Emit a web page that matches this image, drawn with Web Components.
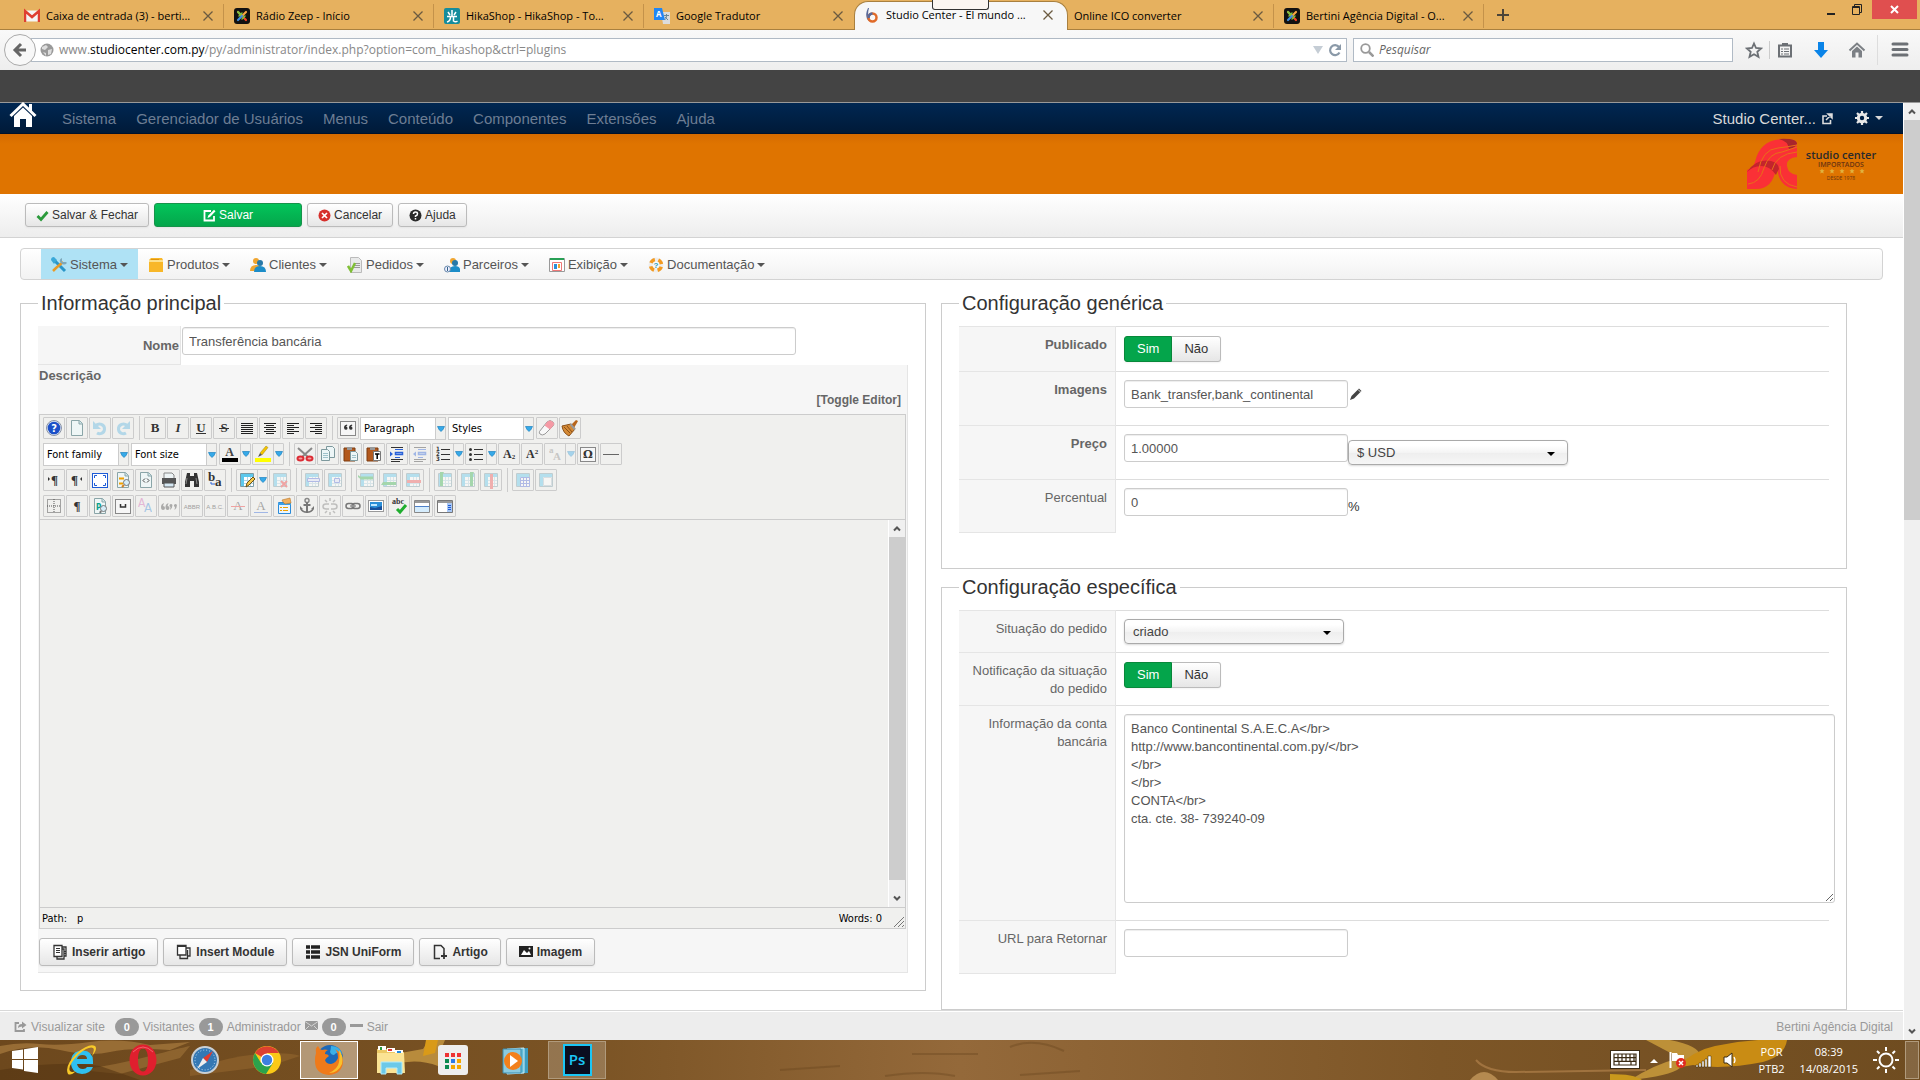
<!DOCTYPE html>
<html lang="pt-BR">
<head>
<meta charset="utf-8">
<title>Studio Center - El mundo ...</title>
<style>
  html, body {
    height: 100%;
    margin: 0;
  }

  body {
    display: flex;
    flex-direction: column;
    overflow: hidden;
    background: #fff;
    color: #555;
    font-family: "Liberation Sans", Arial, sans-serif;
    font-size: 13px;
    line-height: 18px;
    --ui-font: "Open Sans", "Noto Sans", sans-serif;
  }

  .band {
    flex: none;
    height: 32px;
    background: #444;
    border-bottom: 1px solid #999;
  }

  .window {
    display: flex;
    flex: 1;
    min-height: 0;
  }

  .document {
    display: flex;
    flex-direction: column;
    flex: 1;
    min-width: 0;
    margin-right: 1px;
  }

  main {
    display: grid;
    grid-template-columns: minmax(0, 1fr) minmax(0, 1fr);
    grid-template-rows: minmax(0, 1fr);
    gap: 15px;
    flex: 1;
    min-height: 0;
    overflow: hidden;
    padding: 9px 56px 0 20px;
  }

  .column {
    display: flex;
    flex-direction: column;
    gap: 4px;
  }
</style>
</head>
<body>
  <browser-tabs></browser-tabs>
  <browser-toolbar></browser-toolbar>
  <div class="band"></div>
  <div class="window">
    <div class="document">
      <admin-nav></admin-nav>
      <brand-header></brand-header>
      <action-toolbar></action-toolbar>
      <shop-menu></shop-menu>
      <main>
        <div class="column">
          <panel-box heading="Informação principal">
            <main-info></main-info>
          </panel-box>
        </div>
        <div class="column">
          <panel-box heading="Configuração genérica" class="loose">
            <config-row label="Publicado" type="toggle" strong></config-row>
            <config-row label="Imagens" type="text" value="Bank_transfer,bank_continental" suffix="pencil" strong></config-row>
            <config-row label="Preço" type="text" value="1.00000" suffix="currency" strong></config-row>
            <config-row label="Percentual" type="text" value="0" suffix="percent" last></config-row>
          </panel-box>
          <panel-box heading="Configuração específica" class="fill">
            <config-row label="Situação do pedido" type="select" value="criado"></config-row>
            <config-row label="Notificação da situação do pedido" type="toggle"></config-row>
            <config-row label="Informação da conta bancária" type="textarea" value="Banco Continental S.A.E.C.A&lt;/br&gt;
http://www.bancontinental.com.py/&lt;/br&gt;
&lt;/br&gt;
&lt;/br&gt;
CONTA&lt;/br&gt;
cta. cte. 38- 739240-09"></config-row>
            <config-row label="URL para Retornar" type="text" value="" last></config-row>
          </panel-box>
        </div>
      </main>
      <status-footer></status-footer>
    </div>
    <scroll-bar style="--thumb: 400px"></scroll-bar>
  </div>
  <task-bar></task-bar>

<script>
// ---------- icons ----------
const page = '<path d="M4.500 2.500h8l3 3v12h-11z" fill="#eef6f6" stroke="#8aa5a8"/><path d="M12 2.500v3.500h3.500" fill="#cfe6ea" stroke="#8aa5a8"/>';
const table = '<path d="M3.500 3.500h13v13h-13z" fill="#fff" stroke="#7a9aa5"/><path d="M4 4h12v3H4zM4 4h3v12H4z" fill="#5cc8ec"/><path d="M7 10.500h9M7 13.500h9M10.500 7v9M13.500 7v9" stroke="#b5d5e2"/>';
const frame = '<rect x="2.500" y="3.500" width="15" height="14" fill="#f6f6f6" stroke="#888"/>';
const letter = (t, more = '') => `<text x="10" y="14" text-anchor="middle" font-family="Liberation Serif, serif" font-size="13" fill="#333" ${more}>${t}</text>`;
const lines = (rows) => rows.map(([x, w], i) => `<rect x="${x}" y="${5 + i * 2}" width="${w}" height="1" fill="#222"/>`).join('');
const joomla = '<rect width="16" height="16" rx="3" fill="#111"/><g fill="none" stroke-width="2.200" stroke-linecap="round"><path d="M4 4l3 3M12 12l-3-3" stroke="#f44321"/><path d="M4 4l4 4" stroke="#7ac143"/><path d="M12 4L8 8" stroke="#f9a541"/><path d="M4 12l4-4" stroke="#3f8fe0"/><path d="M5 8l3-3M8 11l3-3" stroke="#7ac143" stroke-width="1.500"/></g>';

const ICONS = {
  // editor toolbar
  help: [20, '<circle cx="10" cy="10" r="7.500" fill="#dde6f5" stroke="#8a93a5"/><circle cx="10" cy="10" r="6.300" fill="#1c50c8"/><text x="10" y="14" text-anchor="middle" font-size="11" font-weight="bold" fill="#fff">?</text>'],
  page: [20, page],
  undo: [20, '<path d="M5 8.500c4-5 10-1.500 9.500 3-.5 4-5 5-7.500 3.500" fill="none" stroke="#5ab4e0" stroke-width="3"/><path d="M3 3v8h8z" fill="#5ab4e0"/>'],
  redo: [20, '<path d="M15 8.500c-4-5-10-1.500-9.500 3 .5 4 5 5 7.500 3.500" fill="none" stroke="#5ab4e0" stroke-width="3"/><path d="M17 3v8H9z" fill="#5ab4e0"/>'],
  bold: [20, letter('B', 'font-weight="bold"')],
  italic: [20, letter('I', 'font-weight="bold" font-style="italic"')],
  underline: [20, letter('U', 'font-weight="bold"') + '<path d="M5 15.500h10" stroke="#333"/>'],
  strike: [20, letter('S', 'font-weight="bold"') + '<path d="M5 10.500h10" stroke="#333"/>'],
  justify: [20, lines([[4, 12], [4, 12], [4, 12], [4, 12], [4, 12], [4, 12]])],
  center: [20, lines([[4, 12], [6, 8], [4, 12], [6, 8], [4, 12], [6, 8]])],
  left: [20, lines([[4, 12], [4, 7], [4, 12], [4, 7], [4, 12], [4, 7]])],
  right: [20, lines([[4, 12], [9, 7], [4, 12], [9, 7], [4, 12], [9, 7]])],
  quote: [20, frame + '<path d="M6 9.500q0-2.500 3-3l.3 1-1.300 1q1.500.2 1.500 1.700t-1.700 1.600T6 9.500zM11 9.500q0-2.500 3-3l.3 1-1.300 1q1.500.2 1.500 1.700t-1.700 1.600T11 9.500z" fill="#333"/>'],
  eraser: [20, '<path d="M2.500 13.500L10 4q3-3 6 0 2 2 0 4l-8 8q-3 2-5 0-1-1-.5-2.500z" fill="#f8f8f8" stroke="#999"/><path d="M7.500 7.500L10 4q3-3 6 0 2 2 0 4l-3 3.500z" fill="#f59aa5"/>'],
  broom: [20, '<path d="M2 8l9-2 4 5-6 7Q3 15 2 8z" fill="#d58a35" stroke="#8a5018"/><path d="M4 9l6 6M7 8l5 6" stroke="#8a5018"/><path d="M11 7l5-5 2 1-4 7z" fill="#b8651b"/><path d="M10.500 6l4.500 5.500" stroke="#999" stroke-width="2"/>'],
  color: [20, '<text x="9.500" y="12" text-anchor="middle" font-family="Liberation Serif, serif" font-size="12" font-weight="bold" fill="#444">A</text><rect x="2" y="14" width="16" height="4"/>'],
  marker: [20, '<path d="M7 9l6-7 2 1.500L9 11z" fill="#f5c400" stroke="#9a8420" stroke-width=".5"/><path d="M7 9l2 2-4 2z" fill="#555"/><rect x="2" y="14" width="16" height="4" fill="#ff0"/>'],
  cut: [20, '<path d="M3 4l10 9M17 4L7 13" stroke="#888" stroke-width="2"/><ellipse cx="5.500" cy="14.500" rx="3" ry="2" fill="#f3a0a3" stroke="#dc2d35" stroke-width="2"/><ellipse cx="14.500" cy="14.500" rx="3" ry="2" fill="#f3a0a3" stroke="#dc2d35" stroke-width="2"/>'],
  copy: [20, '<path d="M8.500 2.500h6l2 2v9h-8z" fill="#edf6f7" stroke="#7d999d"/><path d="M3.500 5.500h6l2 2v9h-8z" fill="#edf6f7" stroke="#7d999d"/><path d="M5 9.500h5M5 11.500h5M5 13.500h5" stroke="#9fc2ca"/>'],
  paste: [20, '<path d="M3 4h11v13H3z" fill="#b3591d" stroke="#7c3c10"/><path d="M6 3h5v3H6z" fill="#999"/><path d="M9.500 7.500h5l2 2v7h-7z" fill="#edf6f7" stroke="#7d999d"/><path d="M11 11.500h4M11 13.500h4" stroke="#9fc2ca"/>'],
  pastetext: [20, '<path d="M3 4h11v13H3z" fill="#b3591d" stroke="#7c3c10"/><path d="M6 3h5v3H6z" fill="#999"/><path d="M9.500 7.500h7v9h-7z" fill="#fff" stroke="#777"/><path d="M11 10h4.500M13.200 10v5" stroke="#000" stroke-width="1.500"/>'],
  indent: [20, '<path d="M4 3.500h12M4 15.500h12M4 17.500h9" stroke="#333"/><path d="M8 5.500h8M8 13.500h5" stroke="#2a62d8"/><path d="M8.500 8.500h7v2h-7z" fill="#cfe0ff" stroke="#2a62d8" stroke-width="1.500"/><path d="M3 7.500v5l3-2.500z" fill="#2a62d8"/>'],
  outdent: [20, '<path d="M4 3.500h12M4 15.500h12M4 17.500h9" stroke="#333"/><path d="M8 5.500h8M8 13.500h5" stroke="#2a62d8"/><path d="M8.500 8.500h7v2h-7z" fill="#cfe0ff" stroke="#2a62d8" stroke-width="1.500"/><path d="M6 7.500v5L3 10z" fill="#2a62d8"/>'],
  numlist: [20, '<path d="M8 5.500h9M8 10.500h9M8 15.500h9" stroke="#333"/><g font-size="6" font-weight="bold" fill="#333"><text x="3" y="7">1</text><text x="3" y="12">2</text><text x="3" y="17">3</text></g>'],
  bullist: [20, '<path d="M8 5.500h9M8 10.500h9M8 15.500h9" stroke="#333"/><g fill="#333"><circle cx="4.500" cy="5.500" r="1.500"/><circle cx="4.500" cy="10.500" r="1.500"/><circle cx="4.500" cy="15.500" r="1.500"/></g>'],
  sub: [20, '<text x="4" y="14" font-family="Liberation Serif, serif" font-size="12" font-weight="bold" fill="#333">A<tspan font-size="7" dy="1">2</tspan></text>'],
  sup: [20, '<text x="4" y="14" font-family="Liberation Serif, serif" font-size="12" font-weight="bold" fill="#333">A<tspan font-size="7" dy="-4">2</tspan></text>'],
  style: [20, '<text x="4" y="9" font-family="Liberation Serif, serif" font-size="9" font-weight="bold" fill="#888">a</text><text x="8" y="16" font-family="Liberation Serif, serif" font-size="11" font-weight="bold" fill="#888">A</text>'],
  omega: [20, frame + '<text x="10" y="14" text-anchor="middle" font-family="DejaVu Serif, serif" font-size="11" font-weight="bold" fill="#333">Ω</text>'],
  rule: [20, '<path d="M2 10.500h16" stroke="#666"/>'],
  ltr: [20, '<text x="7" y="14" font-family="Liberation Serif, serif" font-size="13" font-weight="bold" fill="#333">¶</text><path d="M4 7v4l2-2z" fill="#333"/>'],
  rtl: [20, '<text x="4" y="14" font-family="Liberation Serif, serif" font-size="13" font-weight="bold" fill="#333">¶</text><path d="M15 7v4l-2-2z" fill="#333"/>'],
  pilcrow: [20, letter('¶', 'font-weight="bold"')],
  full: [20, '<rect x="2.500" y="3.500" width="15" height="14" fill="#fff" stroke="#1d5bd6"/><path d="M4.500 8V5.500H7M13 5.500h2.500V8M15.500 13v2.500H13M7 15.500H4.500V13" fill="none" stroke="#1d5bd6"/>'],
  preview: [20, page + '<path d="M6 8.500h5M6 13.500h4" stroke="#f0a000" stroke-width="2"/><circle cx="13.500" cy="12.500" r="3" fill="#d5ecf8" stroke="#777"/><path d="M11 15l-2 2" stroke="#d08020" stroke-width="2"/>'],
  code: [20, page + '<path d="M9 8.500l-2 2 2 2M11 8.500l2 2-2 2" fill="none" stroke="#444"/>'],
  print: [20, '<path d="M5 3h8l2 2v4H5z" fill="#eef4f5" stroke="#888"/><path d="M3 8h14v6H3z" fill="#555"/><path d="M5 13h10v4H5z" fill="#d5e8f3" stroke="#555"/>'],
  find: [20, '<path d="M5 3h3v3h4V3h3l2 9v5h-5v-6H8v6H3v-5z" fill="#333"/><path d="M5 8l-1 6M14 8l1 6" stroke="#888"/>'],
  replace: [20, '<g font-family="Liberation Serif, serif" font-size="13" font-weight="bold" fill="#333"><text x="3" y="11">b</text><text x="10" y="16">a</text></g><path d="M6 12v2h4" fill="none" stroke="#2a62d8"/>'],
  tableedit: [20, table + '<path d="M9 17l1-4 6-6 2 2-6 6z" fill="#f5c84a" stroke="#6b5215"/>'],
  tabledel: [20, table + '<path d="M11 11l6 6M17 11l-6 6" stroke="#e33" stroke-width="2"/>'],
  rowprops: [20, table + '<path d="M5.500 8.500h12v3h-12z" fill="#dfe5ff" stroke="#556ad8"/>'],
  cellprops: [20, table + '<path d="M9.500 8.500h5v4h-5z" fill="#dfe5ff" stroke="#556ad8"/>'],
  rowbefore: [20, table + '<path d="M1 5l2 1.500h13v3H4L1 7z" fill="#35b04a"/>'],
  rowafter: [20, table + '<path d="M1 15l2-3h13v3H4z" fill="#35b04a"/>'],
  rowdel: [20, table + '<path d="M4 10h14v3H4z" fill="#f05050"/>'],
  colbefore: [20, table + '<path d="M5 2h4l-1 2v12H5z" fill="#35b04a"/>'],
  colafter: [20, table + '<path d="M12 2h4l-1 2v12h-3z" fill="#35b04a"/>'],
  coldel: [20, table + '<path d="M9 4h3v15H9z" fill="#f05050"/>'],
  split: [20, table + '<path d="M7.500 7.500h9v9h-9zM10.500 7v9M13.500 7v9M7 10.500h9M7 13.500h9" fill="none" stroke="#556ad8"/>'],
  merge: [20, table + '<path d="M7.500 7.500h8v8h-8z" fill="#fff" stroke="#b5c5d0"/>'],
  grid: [20, '<path d="M3.500 3.500h13v13h-13zM10 3v14M3 10h14" fill="none" stroke="#555" stroke-dasharray="1 1"/>'],
  template: [20, page + '<text x="6" y="14" font-size="8" font-weight="bold" fill="#08a08a">P</text><circle cx="13.500" cy="12.500" r="3" fill="#d5ecf8" stroke="#777"/><path d="M11 15l-1 2" stroke="#777" stroke-width="2"/>'],
  nbsp: [20, frame + '<path d="M7.500 8v3h5V8" fill="none" stroke="#333" stroke-width="1.500"/>'],
  styleprops: [20, '<text x="2" y="11" font-size="12" fill="#d060b0">A</text><text x="8" y="16" font-size="13" fill="#3a8ad8">A</text>'],
  cite: [20, '<path d="M2 11q0-3 3-4l-1 3q2 0 2 2t-2 2-2-3zM6.500 11q0-3 3-4l-1 3q2 0 2 2t-2 2-2-3zM13.500 9q0 3-2.500 5l.5-3q-1.500-.500-1-2 1.500-2 3 0zM18 9q0 3-2.500 5l.5-3q-1.500-.500-1-2 1.500-2 3 0z" fill="#444"/>'],
  abbr: [20, '<text x="10" y="13" text-anchor="middle" font-family="Liberation Sans" font-size="6" fill="#222">ABBR</text>'],
  acronym: [20, '<text x="10" y="13" text-anchor="middle" font-family="Liberation Sans" font-size="6" fill="#222">A.B.C.</text>'],
  del: [20, letter('A') + '<path d="M3 10.500h14" stroke="#e33"/>'],
  ins: [20, letter('A') + '<path d="M3 16.500h14" stroke="#2a62d8"/>'],
  attribs: [20, '<path d="M4.500 6.500h12v11h-12z" fill="#eaf5ff" stroke="#2a8ad8"/><path d="M4 7h13v2H4z" fill="#39a0e8"/><path d="M6 11.500h2M9 11.500h5M6 14.500h2M9 14.500h5" stroke="#f0a000"/><path d="M8 4l8-2 1 5-6 1-2-2z" fill="#f0b060" stroke="#b87525" stroke-width=".6"/>'],
  anchor: [20, '<circle cx="10" cy="4.500" r="2" fill="none" stroke="#888" stroke-width="1.500"/><path d="M10 6v11M6.500 9h7" stroke="#777" stroke-width="2"/><path d="M3 10v3q2 4 7 4t7-4v-3l-3 3 1 .5q-2 2-5 2t-5-2l1-.5z" fill="#777"/>'],
  unlink: [20, '<path d="M9 8H6q-3 0-3 2.500T6 13h3M11 8h3q3 0 3 2.500T14 13h-3M10 2v3M10 16v3M5 4l2 2M15 4l-2 2M5 17l2-2M15 17l-2-2" fill="none" stroke="#777" stroke-width="1.500"/>'],
  link: [20, '<rect x="3" y="7.500" width="8" height="5" rx="2.500" fill="none" stroke="#777" stroke-width="1.500"/><rect x="9" y="7.500" width="8" height="5" rx="2.500" fill="none" stroke="#777" stroke-width="1.500"/><path d="M7 10h6" stroke="#999" stroke-width="1.500"/>'],
  image: [20, '<rect x="2.500" y="4.500" width="15" height="11" fill="#fff" stroke="#999"/><path d="M4 6h12v8H4z" fill="#2a8fd8"/><path d="M4 14v-3l5 1 7-2v4z" fill="#164f9a"/><path d="M5 8h6v2H5z" fill="#bfe8ff"/>'],
  spell: [20, '<text x="3" y="8" font-size="8" font-weight="bold" font-family="Liberation Serif, serif" fill="#333">abc</text><path d="M8 13l3 3 6-7" fill="none" stroke="#1fae2e" stroke-width="3"/>'],
  hr2: [20, '<path d="M2.500 4.500h15v12h-15z" fill="#fff" stroke="#888"/><path d="M3 5h14v2H3z" fill="#999"/><path d="M3 11h14v5H3z" fill="#d5ecfc"/><path d="M3 10.500h14" stroke="#4d80c8"/>'],
  pagebreak: [20, '<path d="M2.500 4.500h15v12h-15z" fill="#fff" stroke="#777"/><path d="M3 5h14v2H3z" fill="#999"/><path d="M12 7h5v9h-5z" fill="#a9c8f5"/><path d="M13 9.500h3M13 11.500h3M13 13.500h3" stroke="#1d5bd6"/>'],

  // browser
  gmail: [16, '<path d="M1 2.500h14v11H1z" fill="#f5f5f5"/><path d="M1 14V3l7 6 7-6v11" fill="none" stroke="#df3f31" stroke-width="2.500"/>'],
  joomla: [16, joomla],
  hika: [16, '<rect width="16" height="16" rx="2" fill="#158c9c"/><path d="M8 2v6M3 8.500h10M4 4l2 3M12 4l-2 3M6.500 9q0 4-3.500 5M9.500 9v4q2 1.500 4 0" fill="none" stroke="#fff" stroke-width="1.500"/>'],
  translate: [16, '<path d="M7 4h9v12H9z" fill="#dcdcdc"/><path d="M0 0h8l3 12H0z" fill="#2086f3"/><text x="2" y="9" font-size="8" font-weight="bold" fill="#fff">A</text><path d="M10 7.500h5M12.500 6v2q0 3-2 4M11 9l3 3" stroke="#6b8795" fill="none"/>'],
  studio: [16, '<path d="M4 1Q1 7 3 12q2 3 5 3-4-3-4-7t1-7z" fill="#596a9a"/><circle cx="8.500" cy="10.500" r="4" fill="none" stroke="#e06a28" stroke-width="2.500"/><path d="M4.500 11q0-4 4-4.500" fill="none" stroke="#596a9a" stroke-width="2.500"/>'],
  close: [12, '<path d="M1.500 1.500l9 9M10.500 1.500l-9 9" stroke="#6b5a40" stroke-width="1.300"/>'],
  plus: [12, '<path d="M6 0v12M0 6h12" stroke="#4d4538" stroke-width="2"/>'],
  globe: [14, '<circle cx="7" cy="7" r="6.500" fill="#999"/><path d="M2 4l4-2 2 2-3 3-3-1zM8 7l4-1-1 5-3 1zM3 9l3 1v3z" fill="#ddd"/>'],
  back: [16, '<path d="M9 2L3 8l6 6M3 8h11" fill="none" stroke="#666" stroke-width="3"/>'],
  reload: [14, '<path d="M11.500 9.500A5 5 0 1 1 11 4" fill="none" stroke="#8a99a8" stroke-width="2.200"/><path d="M13 1v6H7z" fill="#8a99a8"/>'],
  search: [14, '<circle cx="5.500" cy="5.500" r="4.300" fill="none" stroke="#999" stroke-width="1.800"/><path d="M9 9l4.500 4.500" stroke="#999" stroke-width="2.500"/>'],
  star: [18, '<path d="M9 2.500l2 4.500 5 .5-3.700 3.300 1.200 5L9 13.200l-4.500 2.600 1.200-5L2 7.500 7 7z" fill="none" stroke="#6c7075" stroke-width="1.800"/>'],
  clipboard: [18, '<path d="M3 4.500h12v11H3z" fill="none" stroke="#6c7075" stroke-width="2"/><path d="M6 2h6v3H6z" fill="#6c7075"/><path d="M5 8h2M8 8h5M5 10.500h2M8 10.500h5M5 13h2M8 13h5" stroke="#6c7075"/>'],
  download: [18, '<path d="M6 1h6v8h4l-7 8-7-8h4z" fill="#0a84e8"/>'],
  homegrey: [18, '<path d="M1.500 9.500L9 2.500l7.500 7" fill="none" stroke="#7c8085" stroke-width="2"/><path d="M4 10l5-4.500 5 4.500v6.500h-3.500v-5h-3v5H4z" fill="#7c8085"/>'],
  menu: [18, '<path d="M2 3h14M2 8.500h14M2 14h14" stroke="#6c7075" stroke-width="3" stroke-linecap="round"/>'],

  // administrator
  home: [28, '<path d="M1.500 14L14 2l12.500 12" fill="none" stroke="#fff" stroke-width="3"/><path d="M20 2h3v8l-3-3zM5 14l9-8.500 9 8.500v11h-6v-8h-6v8H5z" fill="#fff"/>'],
  external: [12, '<path d="M6 3H2v7.500h7.500V7" fill="none" stroke="#ddd" stroke-width="1.600"/><path d="M7 1h4v4zM5 7l5-5" fill="#ddd" stroke="#ddd" stroke-width="1.500"/>'],
  gear: [14, '<circle cx="7" cy="7" r="3.700" fill="none" stroke="#e8e8e8" stroke-width="3"/><path d="M7 0v3M7 11v3M0 7h3M11 7h3M2 2l2 2M10 10l2 2M12 2l-2 2M2 12l2-2" stroke="#e8e8e8" stroke-width="2.200"/>'],
  check: [13, '<path d="M1.500 7l3.500 3.500L11.500 3" fill="none" stroke="#2b9a3b" stroke-width="2.800"/>'],
  edit: [13, '<path d="M8 2H1.500v9.500H11V7" fill="none" stroke="#fff" stroke-width="1.800"/><path d="M4.500 9l.8-2.500L11 .8l1.500 1.500L7 8z" fill="#fff"/>'],
  cancel: [13, '<circle cx="6.500" cy="6.500" r="6" fill="#d62f2b"/><path d="M4 4l5 5M9 4L4 9" stroke="#fff" stroke-width="1.700"/>'],
  question: [13, '<circle cx="6.500" cy="6.500" r="6" fill="#2a2a2a"/><path d="M4.500 5q0-2 2-2t2 1.700T6.500 7v1M6.500 9v1.500" fill="none" stroke="#fff" stroke-width="1.500"/>'],
  tools: [16, '<path d="M3 3l6 6 5 5" stroke="#2b96c8" stroke-width="3"/><path d="M0 3q0-3 3-3l3 3-3 4z" fill="#3aa8d8"/><path d="M12 5l-7 6-3 3" stroke="#e89a28" stroke-width="2.500"/><path d="M11 1v4h4l1 1q-3 3-6 0T11 1z" fill="#7ea8ba"/>'],
  box: [16, '<path d="M1 3l2-2h11l1 2v12H1z" fill="#f8b728"/><path d="M1 4h14" stroke="#fde08a" stroke-width="2"/><path d="M3 2.500h8" stroke="#e09510"/>'],
  users: [16, '<circle cx="6" cy="4" r="3" fill="#f0a530"/><path d="M0 14q0-6 6-6t5 6z" fill="#f0a530"/><circle cx="10" cy="6" r="3" fill="#2779a8"/><path d="M4 15q0-6 6-6t6 6z" fill="#1c8dc8"/>'],
  orders: [16, '<path d="M3.500.5h8l3 3v12h-11z" fill="#e9eaea" stroke="#bbb"/><path d="M7 6.500h6M7 8.500h6M7 10.500h6" stroke="#999"/><path d="M1 9l3 5 4-8" fill="none" stroke="#7fbf35" stroke-width="2.500"/>'],
  partners: [16, '<circle cx="9" cy="4" r="3" fill="#f0a530"/><circle cx="11" cy="6" r="3" fill="#2779a8"/><path d="M5 15q0-6 6-6t5 6z" fill="#1c8dc8"/><circle cx="3.500" cy="12" r="3" fill="#eef" stroke="#68a"/><path d="M3.500 10v4" stroke="#368"/>'],
  display: [16, '<path d="M.5 1.500h15v13H.5z" fill="#fff" stroke="#999"/><path d="M1 1h14v2H1z" fill="#28a055"/><path d="M3.500 5.500h9v8h-9z" fill="#fff" stroke="#e77"/><path d="M5 7h3v5H5z" fill="#2a8fd8"/><path d="M9 7h2v4H9z" fill="#f0a530"/>'],
  lifebuoy: [16, '<circle cx="8" cy="8" r="5.500" fill="none" stroke="#eee" stroke-width="4"/><circle cx="8" cy="8" r="5.500" fill="none" stroke="#f39a21" stroke-width="3.500" stroke-dasharray="5 3.640" stroke-dashoffset="-1.800"/><text x="8" y="11" text-anchor="middle" font-size="8" font-weight="bold" fill="#2a9ab8">?</text>'],
  pencil: [14, '<path d="M1 13l1.500-4L10 1.500 12.500 4 5 11.500z" fill="#444"/><path d="M9 2.500L11.500 5" stroke="#fff" stroke-width=".8"/>'],
  article: [16, '<path d="M10 3h4v9h-2" fill="none" stroke="#333" stroke-width="1.300"/><path d="M5 13v2h7V5h-2" fill="none" stroke="#333" stroke-width="1.300"/><path d="M2 1.500h8v11H2z" fill="#fff" stroke="#333" stroke-width="1.300"/><path d="M4 4.500h4M4 6.500h4M4 8.500h4M12 7.500h2M12 9.500h2" stroke="#333"/>'],
  module: [16, '<path d="M10 4h4v8h-2" fill="none" stroke="#333" stroke-width="1.300"/><path d="M4 11v3.500h7.500V6" fill="none" stroke="#333" stroke-width="1.300"/><path d="M1.500 1.500H10V11H1.500z" fill="#fff" stroke="#333" stroke-width="1.300"/><path d="M1 2h9" stroke="#333" stroke-width="2"/>'],
  list: [16, '<path d="M1 3h4M6 3h9M1 8h4M6 8h9M1 13h4M6 13h9" stroke="#222" stroke-width="3.500"/>'],
  newpage: [16, '<path d="M8 14.500H2.500v-13H9L12 4.500V9" fill="none" stroke="#333" stroke-width="1.500"/><path d="M12 9v6M9 12h6" stroke="#333" stroke-width="1.800"/>'],
  picture: [14, '<path d="M0 1h14v11H0z" fill="#222"/><path d="M2 10l3-5 3 3 2-2 2 4z" fill="#fff"/><circle cx="10.500" cy="3.500" r="1" fill="#fff"/>'],
  share: [13, '<path d="M5 3H1.500v8H10V9" fill="none" stroke="#999" stroke-width="1.800"/><path d="M4 8q0-4 4-4V1.500L12.500 5 8 8.500V6.500q-2.500 0-4 1.500z" fill="#999"/>'],
  mail: [13, '<path d="M0 1h13v9H0z" fill="#999"/><path d="M0 1.500l6.500 4.500L13 1.500M0 10l4-4M13 10L9 6" fill="none" stroke="#eee" stroke-width=".7"/>'],
  minus: [13, '<path d="M0 4h13v3H0z" fill="#999"/>'],

  // taskbar
  windows: [28, '<path d="M1 5l11-1.500V13H1zM13 3.300L27 1v12H13zM1 14h11v9.500L1 22zM13 14h14v13l-14-2z" fill="#fff"/>'],
  ie: [32, '<path fill-rule="evenodd" d="M28 20H12q1 5 6 5 3 0 4-2h6q-3 7-11 7Q6 29 6 18T17.500 6.500Q28 7 28 17zM22 15q0-4-4.500-4T12 15z" fill="#2fc0f0"/><path d="M3 30Q-1 22 12 9 24-1 30 2q3 3-3 10 3-7 1-8-4-2-14 6Q2 22 5 27q2 2 6 0-5 5-8 3z" fill="#f8c928"/>'],
  opera: [32, '<path fill-rule="evenodd" d="M16 .5c8 0 13.500 7 13.500 15.500S24 31.500 16 31.500 2.500 24.500 2.500 16 8 .5 16 .5zm0 4c-4 0-5 6-5 11.500s1 11.500 5 11.500 5-6 5-11.500-1-11.500-5-11.500z" fill="#e01f2e"/><path d="M6 8q10-10 20 0" fill="none" stroke="#f2606a"/>'],
  safari: [32, '<circle cx="16" cy="16" r="13" fill="#3478b4" stroke="#c9d0d5" stroke-width="2"/><circle cx="16" cy="16" r="10" fill="none" stroke="#bfe0f8" stroke-dasharray="1 2"/><path d="M24 7l-6 11-4-4z" fill="#e23b2e"/><path d="M8 25l6-11 4 4z" fill="#eee"/>'],
  chrome: [32, '<circle cx="16" cy="16" r="14" fill="#fbc916"/><path d="M16 16L3.900 9A14 14 0 0 1 28 9H16z" fill="#dd4030"/><path d="M16 16l-6 3L3.900 9A14 14 0 0 0 15 30l7-11z" fill="#2ba24c"/><circle cx="16" cy="16" r="6.500" fill="#fff"/><circle cx="16" cy="16" r="5.200" fill="#3d7fe0"/>'],
  firefox: [32, '<circle cx="17" cy="14" r="13" fill="#1c68b8"/><path d="M18 2q9 0 11 8-5-3-8 1-3 0-4-3 1-4 1-6z" fill="#3ab0e8"/><path d="M3 9Q2 4 5 2q1 3 4 4 3-1 6 0-3 1-3 4 3 0 4 2-3 2-4 4 1 4 6 4 5-1 7-6 0-6-3-9 8 4 8 13-1 12-14 13Q2 30 2 17q0-5 1-8z" fill="#ef7a1a"/><path d="M26 6q5 6 3 14-4 9-13 9 9-4 10-11 1-7 0-12z" fill="#f9c02c"/>'],
  explorer: [32, '<path d="M2 5h11l2 3h14v18H2z" fill="#edc965"/><path d="M3 2h8v4H3zM12 4h8v4h-8zM20 6h8v4h-8z" fill="#fff"/><path d="M5 3h2v3H5z" fill="#2a9a40"/><path d="M13 5h4v2h-4z" fill="#d33"/><path d="M22 7h4v2h-4z" fill="#28d"/><path d="M2 9h27l1 20H2z" fill="#fbe394"/><path d="M6 30V18h21v12h-5v-6H11v6z" fill="#6cc9e8" stroke="#b5ecfa"/>'],
  apps: [32, '<rect x="1" y="1" width="30" height="30" rx="3" fill="#eee"/><g><path d="M8 9h4v4H8zM14 9h4v4h-4zM20 9h4v4h-4z" fill="#e33"/><path d="M8 15h4v4H8z" fill="#0a8a50"/><path d="M14 15h4v4h-4z" fill="#2a7ae8"/><path d="M20 15h4v4h-4zM14 21h4v4h-4zM20 21h4v4h-4z" fill="#f5a800"/><path d="M8 21h4v4H8z" fill="#0a8a50"/></g>'],
  media: [32, '<path d="M12 5l17-1v25l-17 1z" fill="#3b9cc0"/><path d="M8 5l17-1v25L8 30z" fill="#62bcd8" stroke="#cceef8"/><path d="M4 5h18v24H4z" fill="#8ccbe0" stroke="#3b8cae"/><circle cx="14" cy="17" r="9" fill="#f2801c"/><path d="M11 11l8 6-8 6z" fill="#fff"/>'],
  ps: [32, '<rect x="3" y="1" width="27" height="30" fill="#0a0e20" stroke="#1bc6f6" stroke-width="2"/><text x="16" y="21" text-anchor="middle" font-family="Open Sans, sans-serif" font-size="15" font-weight="600" fill="#1bc6f6">Ps</text>'],
  keyboard: [30, '<rect x=".5" y="5.500" width="29" height="18" fill="#fff" stroke="#3a2a12"/><g stroke="#3a2a12" stroke-width="1.200" fill="none"><path d="M4 9h22v11H4zM4 12.700h22M4 16.300h22M8 9v7M12 9v7M16 9v7M20 9v7M24 9v7M9 16v4M21 16v4"/></g>'],
  up: [10, '<path d="M1 8l4-4 4 4z" fill="#fff"/>'],
  flag: [18, '<path d="M2.500 1v16" stroke="#fff" stroke-width="2"/><path d="M4 2h5l1 2h6v7h-6l-1-1H4z" fill="#fff"/><circle cx="13" cy="12" r="5" fill="#e02b20"/><path d="M11 10l4 4M15 10l-4 4" stroke="#fff" stroke-width="1.500"/>'],
  signal: [18, '<path d="M1 14h2v2H1zM4 12h2v4H4zM7 10h2v6H7zM10 8h2v8h-2zM13 5h3v11h-3z" fill="#fff" stroke="#3a2a12" stroke-width=".5"/>'],
  volume: [16, '<path d="M2 5h3l5-4v14l-5-4H2z" fill="#fff" stroke="#3a2a12"/><path d="M12 5q2 3 0 6" fill="none" stroke="#fff" stroke-width="1.300"/>'],
  sun: [28, '<circle cx="14" cy="14" r="6.500" fill="none" stroke="#fff" stroke-width="2"/><path d="M14 1v4M14 23v4M1 14h4M23 14h4M5 5l2.500 2.500M20.500 20.500L23 23M23 5l-2.500 2.500M7.500 20.500L5 23" stroke="#fff" stroke-width="2"/>'],
};

function icon(name, size) {
  const [box, body] = ICONS[name];
  const px = size || box;
  return `<svg width="${px}" height="${px}" viewBox="0 0 ${box} ${box}" aria-hidden="true">${body}</svg>`;
}

// ---------- shared styles ----------
const resetStyles = `
  * { box-sizing: border-box; }
  svg { display: block; flex: none; }
  a { color: inherit; text-decoration: none; }
  button, input, select, textarea { font: inherit; color: inherit; margin: 0; }
`;

const buttonStyles = `
  .btn {
    display: inline-flex;
    align-items: center;
    justify-content: center;
    gap: 4px;
    border: 1px solid #bbb;
    border-radius: 3px;
    background: linear-gradient(#fff, #e6e6e6);
    box-shadow: 0 1px 2px rgba(0, 0, 0, .05);
    color: #333;
    white-space: nowrap;
  }
`;

const caretStyles = `
  .caret {
    flex: none;
    width: 0;
    border: 4px solid transparent;
    border-top-color: currentColor;
    border-bottom: 0;
  }
`;

class BaseElement extends HTMLElement {
  constructor() {
    super();
    this.attachShadow({ mode: 'open' });
  }

  connectedCallback() {
    this.shadowRoot.innerHTML = `<style>${resetStyles}${this.styles()}</style>${this.template()}`;
  }
}

// ---------- browser chrome ----------
class BrowserTabs extends BaseElement {
  styles() {
    return `
      :host {
        display: flex;
        flex: none;
        height: 30px;
        position: relative;
        padding-left: 14px;
        background: #e6b15f;
        border-bottom: 1px solid #a9803f;
        box-sizing: border-box;
        font: 11px/26px var(--ui-font);
        color: #000;
      }
      .tab {
        display: flex;
        align-items: center;
        gap: 6px;
        width: 210px;
        height: 24px;
        margin-top: 4px;
        padding: 0 7px 0 10px;
        border-right: 1px solid #c4924a;
        white-space: nowrap;
      }
      .tab span { flex: 1; }
      .tab button, .new {
        border: 0;
        padding: 2px;
        background: none;
      }
      .active {
        height: 29px;
        margin: 1px -4px -1px 0;
        padding: 0 11px 2px 9px;
        width: 214px;
        border: 1px solid #a9803f;
        border-bottom: 0;
        border-radius: 14px 14px 0 0;
        background: #f7f7f7;
      }
      .before { border-right-color: transparent; }
      .new { align-self: center; margin-left: 11px; }
      .grip {
        position: absolute;
        left: 932px;
        top: 0;
        width: 57px;
        height: 10px;
        border: 1px solid #333;
        border-top: 0;
        border-radius: 0 0 3px 3px;
        background: #fbf6f2;
      }
      .controls { display: flex; margin-left: auto; padding-right: 3px; }
      .controls button {
        width: 26px;
        height: 19px;
        padding: 0;
        border: 0;
        background: none;
        display: grid;
        place-items: center;
      }
      .controls .quit { width: 45px; margin-left: 2px; background: #e04f4f; }
    `;
  }

  template() {
    const tabs = [
      ['gmail', 'Caixa de entrada (3) - berti...'],
      ['joomla', 'Rádio Zeep - Início'],
      ['hika', 'HikaShop - HikaShop - To...'],
      ['translate', 'Google Tradutor', 'before'],
      ['studio', 'Studio Center - El mundo ...', 'active'],
      ['', 'Online ICO converter'],
      ['joomla', 'Bertini Agência Digital - O...'],
    ];
    return `
      ${tabs.map(([ico, text, cls]) => `
        <div class="tab ${cls || ''}">${ico ? icon(ico) : ''}<span>${text}</span><button aria-label="Fechar aba">${icon('close')}</button></div>`).join('')}
      <button class="new" aria-label="Nova aba">${icon('plus')}</button>
      <div class="grip"></div>
      <div class="controls">
        <button aria-label="Minimizar"><svg width="10" height="12"><path d="M1 10h8" stroke="#222" stroke-width="2"/></svg></button>
        <button aria-label="Restaurar"><svg width="12" height="12"><path d="M3.500 2.500V.5h7v8h-2M1.500 2.500h7v8h-7zM1.500 3.500h7" fill="none" stroke="#222"/></svg></button>
        <button class="quit" aria-label="Fechar"><svg width="9" height="9"><path d="M1 1l7 7M8 1L1 8" stroke="#fff" stroke-width="2"/></svg></button>
      </div>
    `;
  }
}

class BrowserToolbar extends BaseElement {
  styles() {
    return `
      :host {
        display: flex;
        flex: none;
        align-items: center;
        height: 40px;
        padding: 0 11px 0 4px;
        box-sizing: border-box;
        background: linear-gradient(#f9f9f9, #eee);
        font: 12px/20px var(--ui-font);
        color: #888;
      }
      .back {
        z-index: 1;
        flex: none;
        display: grid;
        place-items: center;
        width: 32px;
        height: 32px;
        padding: 0;
        margin-right: -5px;
        border: 1px solid #aaa;
        border-radius: 50%;
        background: #f8f8f8;
      }
      .field {
        display: flex;
        align-items: center;
        height: 24px;
        border: 1px solid #b0bac5;
        background: #fff;
      }
      .url { flex: 1; padding: 0 4px 0 8px; gap: 5px; }
      .url a { flex: 1; }
      .url b { font-weight: normal; color: #000; }
      .url i { border: 5px solid transparent; border-top: 8px solid #c5cdd5; border-bottom: 0; }
      .find { width: 380px; margin: 0 12px 0 6px; padding-left: 6px; gap: 5px; }
      .find input {
        flex: 1;
        min-width: 0;
        border: 0;
        padding: 0;
        outline: 0;
        background: none;
      }
      .find input::placeholder { color: #666; font-style: italic; opacity: 1; }
      button.tool { border: 0; padding: 0; margin-right: 18px; background: none; }
      button.star { padding-right: 6px; margin-right: 6px; border-right: 1px solid #ccc; }
      button.menu { margin: 0; padding: 6px 0 6px 13px; border-left: 1px solid #ddd; }
      button.home { margin-right: 11px; }
    `;
  }

  template() {
    return `
      <button class="back" aria-label="Voltar">${icon('back')}</button>
      <div class="field url">${icon('globe')}
        <a href="#">www.<b>studiocenter.com.py</b>/py/administrator/index.php?option=com_hikashop&amp;ctrl=plugins</a>
        <i></i>${icon('reload')}
      </div>
      <div class="field find">${icon('search')}<input type="search" aria-label="Pesquisar" placeholder="Pesquisar"></div>
      <button class="tool star" aria-label="Favoritos">${icon('star')}</button>
      <button class="tool" aria-label="Lista">${icon('clipboard')}</button>
      <button class="tool" aria-label="Downloads">${icon('download')}</button>
      <button class="tool home" aria-label="Página inicial">${icon('homegrey')}</button>
      <button class="tool menu" aria-label="Menu">${icon('menu')}</button>
    `;
  }
}

class ScrollBar extends BaseElement {
  styles() {
    return `
      :host {
        display: flex;
        flex-direction: column;
        flex: none;
        width: 16px;
        background: #f0f0f0;
      }
      svg { margin: 5px 4px; }
      .thumb { height: var(--thumb, 100px); background: #cdcdcd; }
      .rest { flex: 1; }
    `;
  }

  template() {
    return `
      <svg width="8" height="7"><path d="M1 5.500l3-3 3 3" fill="none" stroke="#555" stroke-width="2"/></svg>
      <div class="thumb"></div>
      <div class="rest"></div>
      <svg width="8" height="7"><path d="M1 1.500l3 3 3-3" fill="none" stroke="#555" stroke-width="2"/></svg>
    `;
  }
}

// ---------- administrator header ----------
class AdminNav extends BaseElement {
  styles() {
    return `
      :host {
        display: flex;
        flex: none;
        align-items: center;
        height: 31px;
        padding: 0 20px 0 9px;
        box-sizing: border-box;
        background: linear-gradient(#002752, #001a38);
        border-bottom: 1px solid #00112a;
        font-size: 15px;
        color: #6d7d93;
      }
      nav { display: flex; gap: 20px; margin-left: 25px; margin-top: 2px; }
      .home { align-self: flex-start; margin-top: -1px; }
      .site { display: flex; align-items: center; gap: 5px; margin: 2px 0 0 auto; color: #d9d9d9; }
      .tools {
        display: flex;
        align-items: center;
        gap: 6px;
        margin-left: 22px;
        padding: 0;
        border: 0;
        background: none;
        color: #d9d9d9;
      }
      ${caretStyles}
    `;
  }

  template() {
    const items = ['Sistema', 'Gerenciador de Usuários', 'Menus', 'Conteúdo', 'Componentes', 'Extensões', 'Ajuda'];
    return `
      <a class="home" href="#" aria-label="Início">${icon('home')}</a>
      <nav>${items.map((item) => `<a href="#">${item}</a>`).join('')}</nav>
      <a class="site" href="#">Studio Center... ${icon('external')}</a>
      <button class="tools" aria-label="Configurações">${icon('gear')}<span class="caret"></span></button>
    `;
  }
}

class BrandHeader extends BaseElement {
  styles() {
    return `
      :host {
        display: flex;
        flex: none;
        justify-content: flex-end;
        height: 60px;
        padding-right: 23px;
        box-sizing: border-box;
        background: linear-gradient(#d56b00, #df7400 10px);
      }
    `;
  }

  template() {
    return `
      <svg width="134" height="60" viewBox="0 0 134 60" role="img" aria-label="studio center">
        <path d="M1 36q6-2 8-8Q14 5 38 5q13 0 13 5v13q-11 1-10 9 1 8 10 9v14q-16-1-19-16-1-8-2-5-3 21-20 21H1z" fill="#fa3036"/>
        <path d="M1 38q9-14 24-11 8 2 8 8-2 3-3 6-6-9-15-9-8 0-14 6z" fill="#c3242c"/>
        <path d="M33 5q18-1 18 5-2 4-8 5-1-8-10-10z" fill="#a8262c"/>
        <path d="M12 38Q16 15 32 14q9-1 19-3M2 50q12-1 16-16 5-15 18-16l15-5M26 36q4-16 25-18M34 32q-1 18 17 21" fill="none" stroke="#e86f18"/>
        <g font-family="Open Sans, sans-serif" text-anchor="middle" fill="#2a2a2c">
          <text x="95" y="25" font-size="11" font-weight="600">studio center</text>
          <text x="95" y="33" font-size="7" fill="#6b3510" font-weight="600">IMPORTADOS</text>
          <text x="95" y="46" font-size="5" fill="#6b3510">DESDE 1978</text>
        </g>
        <g fill="#e0b340">
          ${[76, 86, 96, 106, 116].map((x) => `<path d="M${x} 34.500l.8 1.800h1.700l-1.300 1.200.5 2-1.700-1-1.700 1 .5-2-1.300-1.200h1.700z"/>`).join('')}
        </g>
      </svg>
    `;
  }
}

class ActionToolbar extends BaseElement {
  styles() {
    return `
      :host {
        display: flex;
        flex: none;
        gap: 5px;
        height: 44px;
        padding: 9px 25px 0;
        box-sizing: border-box;
        background: linear-gradient(#fff, #ededed);
        border-bottom: 1px solid #d3d3d3;
        font-size: 12px;
      }
      ${buttonStyles}
      .btn { height: 24px; padding: 0 10px; gap: 3px; }
      .save {
        width: 148px;
        border-color: #16934a;
        background: linear-gradient(#03c45a, #04a64b);
        color: #fff;
      }
    `;
  }

  template() {
    return `
      <button class="btn">${icon('check')}Salvar &amp; Fechar</button>
      <button class="btn save">${icon('edit')}Salvar</button>
      <button class="btn">${icon('cancel')}Cancelar</button>
      <button class="btn">${icon('question')}Ajuda</button>
    `;
  }
}

class ShopMenu extends BaseElement {
  styles() {
    return `
      :host {
        display: flex;
        flex: none;
        height: 32px;
        margin: 10px 20px 0;
        padding-left: 20px;
        box-sizing: border-box;
        border: 1px solid #d3d3d3;
        border-radius: 4px;
        background: linear-gradient(#fff, #f2f2f2);
      }
      a { display: flex; align-items: center; gap: 3px; padding: 1px 10px 0; }
      a.active { background: #afe2f5; }
      ${caretStyles}
    `;
  }

  template() {
    const items = [
      ['tools', 'Sistema'],
      ['box', 'Produtos'],
      ['users', 'Clientes'],
      ['orders', 'Pedidos'],
      ['partners', 'Parceiros'],
      ['display', 'Exibição'],
      ['lifebuoy', 'Documentação'],
    ];
    return items.map(([ico, text], i) =>
      `<a href="#" class="${i === 0 ? 'active' : ''}">${icon(ico)}<span>${text}</span><span class="caret"></span></a>`).join('');
  }
}

// ---------- panels ----------
class PanelBox extends BaseElement {
  styles() {
    return `
      :host { display: block; }
      :host(.fill) { flex: 1 0 auto; display: flex; }
      fieldset {
        flex: 1;
        min-width: 0;
        margin: 0;
        padding: 9px 17px 17px;
        border: 1px solid #ccc;
      }
      :host(.loose) fieldset { padding-bottom: 35px; }
      legend {
        padding: 0 3px;
        font-size: 20px;
        line-height: 28px;
        color: #333;
      }
    `;
  }

  template() {
    return `<fieldset><legend>${this.getAttribute('heading')}</legend><slot></slot></fieldset>`;
  }
}

const fieldStyles = `
  .text {
    height: 28px;
    padding: 0 6px;
    border: 1px solid #ccc;
    border-radius: 3px;
    background: #fff;
    box-shadow: inset 0 1px 1px rgba(0, 0, 0, .075);
  }
`;

class ConfigRow extends BaseElement {
  styles() {
    return `
      :host {
        display: grid;
        grid-template-columns: 157px minmax(0, 1fr);
      }
      .head {
        padding: 9px 8px 7px 4px;
        border-top: 1px solid #e5e5e5;
        border-right: 1px solid #e5e5e5;
        background: #f6f6f6;
        text-align: right;
        color: #666;
      }
      :host([strong]) .head { font-weight: bold; }
      :host([last]) .head { border-bottom: 1px solid #e5e5e5; }
      .cell {
        display: flex;
        padding: 8px 0 8px 8px;
        border-top: 1px solid #ddd;
      }
      .text { width: 224px; margin-bottom: 9px; }
      .mark { align-self: center; color: #333; }
      a.mark { align-self: flex-start; padding: 7px 1px; }
      textarea {
        display: block;
        flex: none;
        width: calc(100% + 6px);
        height: 189px;
        margin-bottom: 9px;
        padding: 5px 6px;
        border: 1px solid #ccc;
        border-radius: 3px;
        box-shadow: inset 0 1px 1px rgba(0, 0, 0, .075);
      }
      .pick { display: grid; width: 220px; height: 25px; }
      .pick > * { grid-area: 1 / 1; }
      .pick .caret { align-self: center; justify-self: end; margin: 2px 13px 0 0; color: #000; pointer-events: none; }
      select {
        appearance: none;
        padding: 0 8px;
        border: 1px solid #aaa;
        border-radius: 4px;
        background: linear-gradient(#fff 20%, #f4f4f4 50%, #eee 52%, #f6f6f6);
        box-shadow: 0 1px 2px rgba(0, 0, 0, .15);
        color: #444;
      }
      .offset { margin-top: 6px; }
      .toggle { display: flex; margin: 1px 0; height: 26px; }
      .toggle input { position: absolute; opacity: 0; }
      .toggle label { padding: 0 12px; }
      .toggle label:first-of-type { border-radius: 3px 0 0 3px; }
      .toggle label:last-of-type { border-radius: 0 3px 3px 0; border-left: 0; }
      .toggle input:checked + label {
        border-color: #08883a;
        background: #04a54b;
        color: #fff;
      }
      ${buttonStyles}
      ${fieldStyles}
      ${caretStyles}
    `;
  }

  control() {
    const value = this.getAttribute('value') || '';
    switch (this.getAttribute('type')) {
      case 'toggle':
        return `
          <div class="toggle" role="radiogroup" aria-labelledby="name">
            <input type="radio" name="state" id="yes" checked><label class="btn" for="yes">Sim</label>
            <input type="radio" name="state" id="no"><label class="btn" for="no">Não</label>
          </div>`;
      case 'select':
        return `<span class="pick"><select id="field"><option>${value}</option></select><span class="caret"></span></span>`;
      case 'textarea':
        return `<textarea id="field">${value.replace(/</g, '&lt;')}</textarea>`;
      default:
        return `<input class="text" type="text" id="field" value="${value}">`;
    }
  }

  suffix() {
    switch (this.getAttribute('suffix')) {
      case 'pencil':
        return `<a class="mark" href="#" aria-label="Editar">${icon('pencil')}</a>`;
      case 'currency':
        return '<span class="pick offset"><select aria-label="Moeda"><option>$ USD</option></select><span class="caret"></span></span>';
      case 'percent':
        return '<span class="mark">%</span>';
      default:
        return '';
    }
  }

  template() {
    const isToggle = this.getAttribute('type') === 'toggle';
    const label = this.getAttribute('label');
    return `
      <div class="head">${isToggle ? `<span id="name">${label}</span>` : `<label for="field">${label}</label>`}</div>
      <div class="cell">${this.control()}${this.suffix()}</div>
    `;
  }
}

class MainInfo extends BaseElement {
  styles() {
    return `
      :host { display: block; }
      .name { display: flex; height: 39px; padding-right: 112px; }
      .name label {
        flex: none;
        width: 143px;
        padding: 11px 1px 0 0;
        border-right: 1px solid #e5e5e5;
        border-bottom: 1px solid #e5e5e5;
        background: #f6f6f6;
        text-align: right;
        font-weight: bold;
        color: #666;
      }
      .name input { flex: 1; min-width: 0; margin: 1px 0 0 1px; }
      .description {
        padding: 2px 1px 6px;
        border-right: 1px solid #e5e5e5;
        border-bottom: 1px solid #e5e5e5;
        background: #f6f6f6;
      }
      .description strong { display: block; color: #666; }
      .description .toggle { margin: 6px 5px 5px 0; font-size: 12px; text-align: right; }
      .extras { display: flex; gap: 5px; padding-top: 9px; }
      ${buttonStyles}
      .btn { height: 28px; padding: 0 12px; font-size: 12px; font-weight: bold; }
      ${fieldStyles}
    `;
  }

  template() {
    const extras = [
      ['article', 'Inserir artigo'],
      ['module', 'Insert Module'],
      ['list', 'JSN UniForm'],
      ['newpage', 'Artigo'],
      ['picture', 'Imagem'],
    ];
    return `
      <div class="name">
        <label for="name">Nome</label>
        <input class="text" id="name" type="text" value="Transferência bancária">
      </div>
      <div class="description">
        <strong>Descrição</strong>
        <strong class="toggle"><a href="#">[Toggle Editor]</a></strong>
        <rich-editor></rich-editor>
        <div class="extras">${extras.map(([ico, text]) => `<button class="btn">${icon(ico)}${text}</button>`).join('')}</div>
      </div>
    `;
  }
}

// "-" is a separator, "!" marks a disabled tool, "+" a tool with a drop-down,
// ":" a list box
const EDITOR_ROWS = [
  'help page !undo !redo - bold italic underline strike justify center left right - quote :Paragraph :Styles eraser broom',
  ':Font_family :Font_size +color +marker - cut copy paste pastetext indent !outdent +numlist +bullist sub sup !+style omega rule',
  'ltr rtl full preview code print find replace - +tableedit !tabledel - !rowprops !cellprops - !rowbefore !rowafter !rowdel - !colbefore !colafter !coldel - !split !merge',
  'grid pilcrow template nbsp !styleprops !cite !abbr !acronym !del !ins attribs anchor !unlink link image spell hr2 pagebreak',
];

class RichEditor extends BaseElement {
  styles() {
    return `
      :host {
        display: block;
        border: 1px solid #ccc;
        background: #f0f0ee;
        font: 11px/20px "DejaVu Sans Condensed", "Open Sans", sans-serif;
        color: #000;
      }
      .bars { display: grid; gap: 4px; padding: 2px 3px; border-bottom: 1px solid #ccc; }
      .bar { display: flex; gap: 1px; height: 22px; }
      .bar > * { flex: none; }
      .bar button {
        display: flex;
        height: 22px;
        padding: 0;
        border: 1px solid #ccc;
        border-radius: 1px;
        background: none;
      }
      button[disabled] svg { opacity: .4; }
      .drop {
        display: grid;
        place-items: center;
        align-self: stretch;
        width: 10px;
        border-left: 1px solid #ccc;
      }
      .sep { width: 1px; height: 24px; margin: -1px 3px -1px 4px; background: #ccc; }
      .list { display: grid; width: 86px; margin-right: 1px; }
      .list > * { grid-area: 1 / 1; }
      .list .drop { justify-self: end; margin: 1px; background: #f0f0ee; pointer-events: none; }
      select {
        appearance: none;
        padding: 1px 3px 0;
        border: 1px solid #ccc;
        border-radius: 0;
        background: #fff;
      }
      .body { display: flex; height: 387px; }
      .text { flex: 1; border-right: 1px solid #fff; outline: 0; }
      .status {
        display: flex;
        justify-content: space-between;
        padding: 1px 0 0 2px;
        line-height: 19px;
        border-top: 1px solid #ccc;
      }
      .status span { display: flex; gap: 10px; }
      .status svg { align-self: end; }
    `;
  }

  tool(token) {
    if (token === '-') return '<span class="sep"></span>';
    const arrow = '<span class="drop"><svg width="8" height="6"><path d="M.5.5h7L6 3.500 4 5.500 2 3.500z" fill="#36a9e8" stroke="#0b76b8" stroke-width=".6"/></svg></span>';
    if (token[0] === ':') {
      const text = token.slice(1).replace('_', ' ');
      return `<span class="list"><select aria-label="${text}"><option>${text}</option></select>${arrow}</span>`;
    }
    const name = token.replace(/[!+]/g, '');
    return `<button aria-label="${name}" ${token.includes('!') ? 'disabled' : ''}>${icon(name)}${token.includes('+') ? arrow : ''}</button>`;
  }

  template() {
    return `
      <div class="bars">
        ${EDITOR_ROWS.map((row) => `<div class="bar">${row.split(' ').map((t) => this.tool(t)).join('')}</div>`).join('')}
      </div>
      <div class="body">
        <div class="text" contenteditable="true" role="textbox" aria-label="Descrição"></div>
        <scroll-bar style="--thumb: 343px"></scroll-bar>
      </div>
      <div class="status">
        <span>Path: <a href="#">p</a></span>
        <span>Words: 0 <svg width="13" height="13"><path d="M2 12L12 2M6 12l6-6M10 12l2-2" stroke="#777"/></svg></span>
      </div>
    `;
  }
}

// ---------- footer and taskbar ----------
class StatusFooter extends BaseElement {
  styles() {
    return `
      :host {
        display: flex;
        flex: none;
        align-items: center;
        gap: 4px;
        height: 30px;
        padding: 2px 10px 0 14px;
        box-sizing: border-box;
        border-top: 1px solid #d8d8d8;
        box-shadow: inset 0 1px #fff;
        background: #ededed;
        font-size: 12px;
        color: #999;
      }
      b {
        width: 24px;
        border-radius: 9px;
        background: #999;
        color: #fff;
        font-size: 11px;
        text-align: center;
      }
      .view, .out { display: flex; align-items: center; gap: 4px; }
      .view { margin-right: 6px; }
      .credit { margin-left: auto; }
    `;
  }

  template() {
    return `
      <a class="view" href="#">${icon('share')}Visualizar site</a>
      <b>0</b><span>Visitantes</span>
      <b>1</b><span>Administrador</span>
      ${icon('mail')}<b>0</b>
      <a class="out" href="#">${icon('minus')}Sair</a>
      <span class="credit">Bertini Agência Digital</span>
    `;
  }
}

class TaskBar extends BaseElement {
  styles() {
    return `
      :host {
        position: relative;
        display: flex;
        flex: none;
        height: 40px;
        overflow: hidden;
        background: #7a5223;
        font: 11px/17px var(--ui-font);
        color: #fff;
      }
      .wallpaper { position: absolute; inset: 0; width: 100%; height: 100%; }
      .apps, .tray { position: relative; display: flex; align-items: center; }
      .apps button {
        display: grid;
        place-items: center;
        width: 58px;
        height: 38px;
        margin: 0 2px;
        padding: 0;
        border: 1px solid transparent;
        background: none;
      }
      .apps .start { width: 50px; margin: 0; }
      .apps .running { border-color: #b09a7c; background: rgba(255, 255, 255, .2); }
      .apps .current { border-color: #fff; background: rgba(232, 214, 190, .55); }
      .tray { margin-left: auto; }
      .tray > svg { margin-right: 9px; }
      .tray p { margin: 0 0 0 12px; text-align: center; }
      .tray .date { margin-left: 15px; }
      .tray .sun { margin: 0 4px 0 14px; }
      .peek { align-self: stretch; width: 14px; margin: 1px; border: 1px solid #b09a7c; background: rgba(255, 255, 255, .15); }
    `;
  }

  template() {
    const apps = ['ie', 'opera', 'safari', 'chrome', 'firefox', 'explorer', 'apps', 'media', 'ps'];
    const state = { firefox: 'current', ps: 'running' };
    return `
      <svg class="wallpaper" viewBox="0 0 1920 40" preserveAspectRatio="none" aria-hidden="true">
        <defs>
          <linearGradient id="soil">
            <stop offset="0" stop-color="#6d481d"/><stop offset=".3" stop-color="#7a5324"/>
            <stop offset=".5" stop-color="#94693a"/><stop offset=".75" stop-color="#7d5627"/>
            <stop offset="1" stop-color="#6f4c20"/>
          </linearGradient>
        </defs>
        <path d="M0 0h1920v40H0z" fill="url(#soil)"/>
        <path d="M0 6q20-4 40-2t50-2 60 3l40-3-20 8q-40-3-60 2T60 10 0 14z" fill="#a97c3e" opacity=".7"/>
        <path d="M80 30q40-6 70-14t40-10l-10 12-60 16z" fill="#a97c3e" opacity=".5"/>
        <path d="M190 30q40-14 70-16t40 2l-30 10-80 10z" fill="#8f632c" opacity=".7"/>
        <path d="M0 30q60-10 100-4l40 14H0z" fill="#553512" opacity=".6"/>
        <path d="M395 14l28-5 6-9h16l-5 12 20 6-22 8q-20-8-43-2z" fill="#b88b3c"/>
        <path d="M426 0h12l-3 13-12 3z" fill="#d99a18"/>
        <path d="M912 14h66M780 30l60-4M885 36q40-6 70 0M1010 7q24-10 54 4M1020 35l60-4" fill="none" stroke="#5c3c16" stroke-width="2" opacity=".3"/>
        <path d="M1476 20q10 12 40 12l130-2" fill="none" stroke="#a0733f" stroke-width="2"/>
        <path d="M1470 40q14-16 28 0z" fill="#b58a50"/>
        <path d="M1630 40q25-16 50-22l-34-18h24q30 6 30 16l-20 12q-10 8-50 12z" fill="#bd9038"/>
        <path d="M1675 28q20-18 40-22 36-8 72-6-2 16-24 22-40 8-70 3z" fill="#c98c14"/>
        <path d="M1610 34q24 0 32 6h-32z" fill="#c9981c"/>
      </svg>
      <div class="apps">
        <button class="start" aria-label="Iniciar">${icon('windows')}</button>
        ${apps.map((app) => `<button class="${state[app] || ''}" aria-label="${app}">${icon(app)}</button>`).join('')}
      </div>
      <div class="tray">
        ${icon('keyboard')}${icon('up')}${icon('flag')}${icon('signal')}${icon('volume')}
        <p>POR<br>PTB2</p>
        <p class="date">08:39<br>14/08/2015</p>
        <span class="sun">${icon('sun')}</span>
        <span class="peek"></span>
      </div>
    `;
  }
}

customElements.define('browser-tabs', BrowserTabs);
customElements.define('browser-toolbar', BrowserToolbar);
customElements.define('scroll-bar', ScrollBar);
customElements.define('admin-nav', AdminNav);
customElements.define('brand-header', BrandHeader);
customElements.define('action-toolbar', ActionToolbar);
customElements.define('shop-menu', ShopMenu);
customElements.define('panel-box', PanelBox);
customElements.define('config-row', ConfigRow);
customElements.define('rich-editor', RichEditor);
customElements.define('main-info', MainInfo);
customElements.define('status-footer', StatusFooter);
customElements.define('task-bar', TaskBar);
</script>
</body>
</html>
